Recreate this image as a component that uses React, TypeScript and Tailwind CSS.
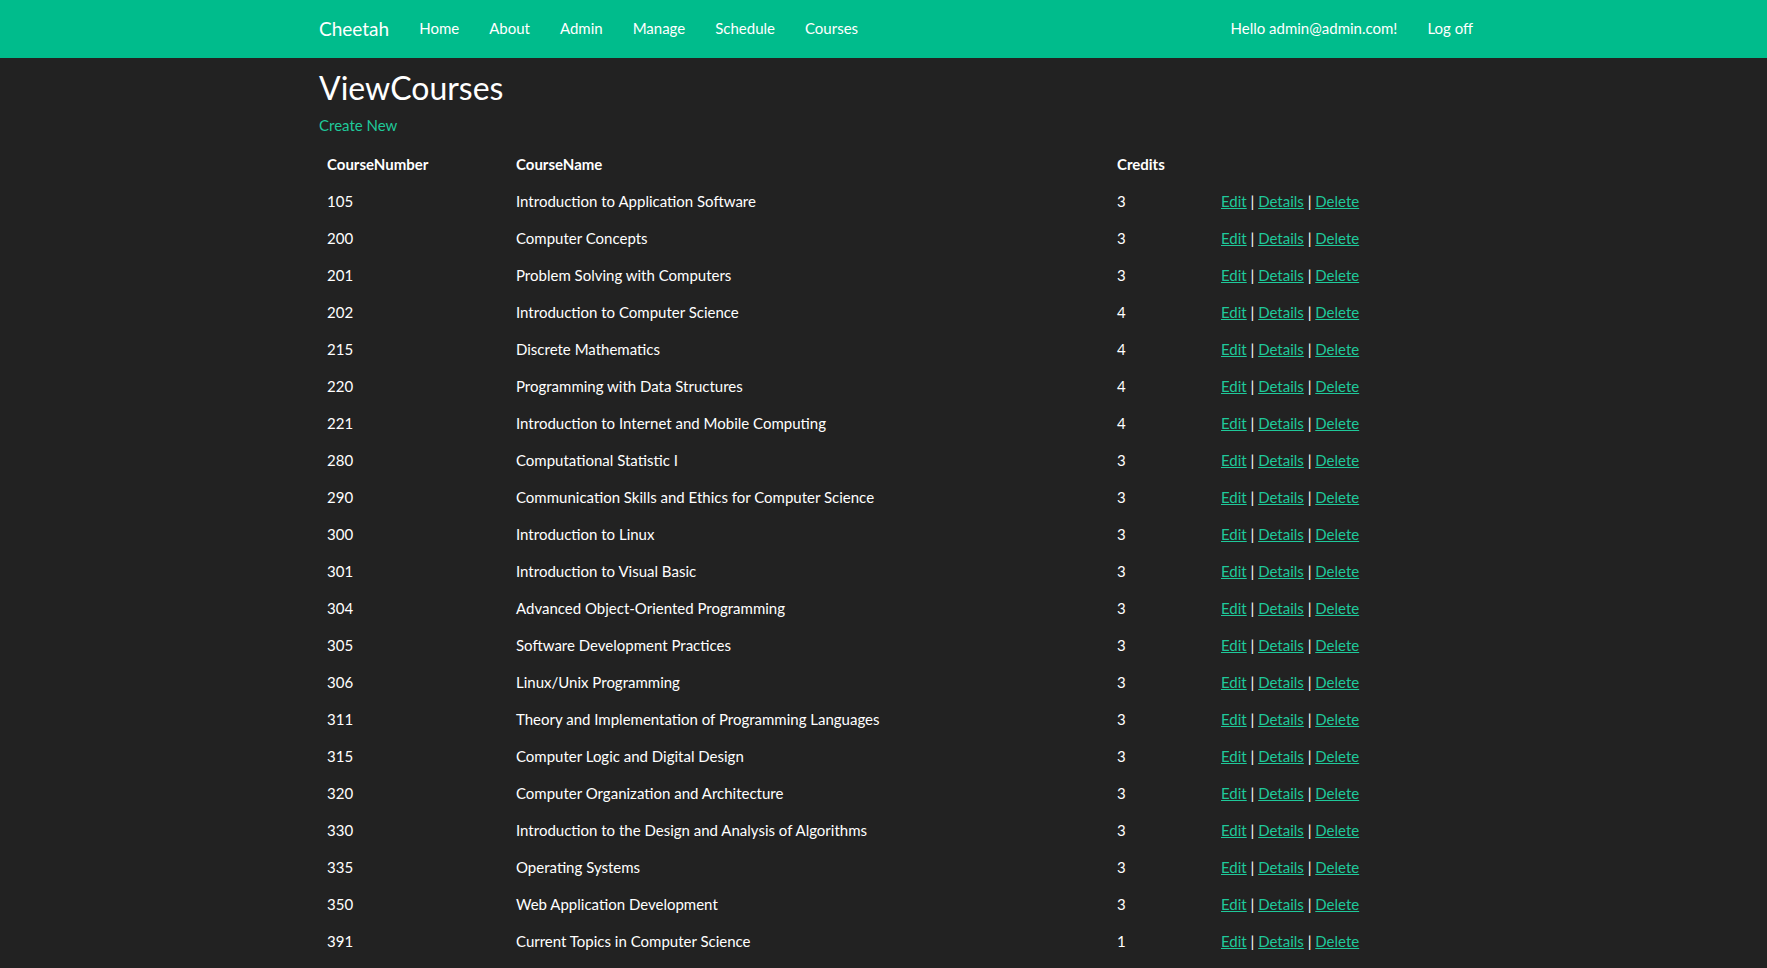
const navLinks = ['Home', 'About', 'Admin', 'Manage', 'Schedule', 'Courses']

const courses: [string, string, number][] = [
  ['105', 'Introduction to Application Software', 3],
  ['200', 'Computer Concepts', 3],
  ['201', 'Problem Solving with Computers', 3],
  ['202', 'Introduction to Computer Science', 4],
  ['215', 'Discrete Mathematics', 4],
  ['220', 'Programming with Data Structures', 4],
  ['221', 'Introduction to Internet and Mobile Computing', 4],
  ['280', 'Computational Statistic I', 3],
  ['290', 'Communication Skills and Ethics for Computer Science', 3],
  ['300', 'Introduction to Linux', 3],
  ['301', 'Introduction to Visual Basic', 3],
  ['304', 'Advanced Object-Oriented Programming', 3],
  ['305', 'Software Development Practices', 3],
  ['306', 'Linux/Unix Programming', 3],
  ['311', 'Theory and Implementation of Programming Languages', 3],
  ['315', 'Computer Logic and Digital Design', 3],
  ['320', 'Computer Organization and Architecture', 3],
  ['330', 'Introduction to the Design and Analysis of Algorithms', 3],
  ['335', 'Operating Systems', 3],
  ['350', 'Web Application Development', 3],
  ['391', 'Current Topics in Computer Science', 1],
]

function RowActions() {
  return (
    <span>
      <a href="#" className="text-[#1fc99a] underline">Edit</a> |{' '}
      <a href="#" className="text-[#1fc99a] underline">Details</a> |{' '}
      <a href="#" className="text-[#1fc99a] underline">Delete</a>
    </span>
  )
}

export default function App() {
  return (
    <div className="min-h-screen bg-[#222222] text-white text-[15px] leading-[21px] font-['Lato','Liberation_Sans',sans-serif]">
      <nav className="h-[58px] bg-[#00bc8c]">
        <div className="ml-[304px] w-[1184px] flex items-center justify-between h-full pb-[2px]">
          <div className="flex items-center">
            <a href="#" className="px-[15px] text-[19px] text-white">Cheetah</a>
            {navLinks.map((l) => (
              <a key={l} href="#" className="px-[15px] text-white">{l}</a>
            ))}
          </div>
          <div className="flex items-center">
            <span className="px-[15px] text-white">Hello admin@admin.com!</span>
            <a href="#" className="px-[15px] text-white">Log off</a>
          </div>
        </div>
      </nav>

      <div className="ml-[319px] w-[1154px]">
        <h2 className="mt-[12px] text-[32px] leading-[35px]">ViewCourses</h2>
        <p className="mt-[10px] mb-[10px]">
          <a href="#" className="text-[#1fc99a]">Create New</a>
        </p>

        <table className="w-full border-collapse">
          <thead>
            <tr>
              <th className="w-[189px] p-2 text-left font-bold">CourseNumber</th>
              <th className="w-[601px] p-2 text-left font-bold">CourseName</th>
              <th className="w-[104px] p-2 text-left font-bold">Credits</th>
              <th className="p-2"></th>
            </tr>
          </thead>
          <tbody>
            {courses.map(([num, name, credits]) => (
              <tr key={num}>
                <td className="p-2">{num}</td>
                <td className="p-2">{name}</td>
                <td className="p-2">{credits}</td>
                <td className="p-2"><RowActions /></td>
              </tr>
            ))}
          </tbody>
        </table>
      </div>
    </div>
  )
}
